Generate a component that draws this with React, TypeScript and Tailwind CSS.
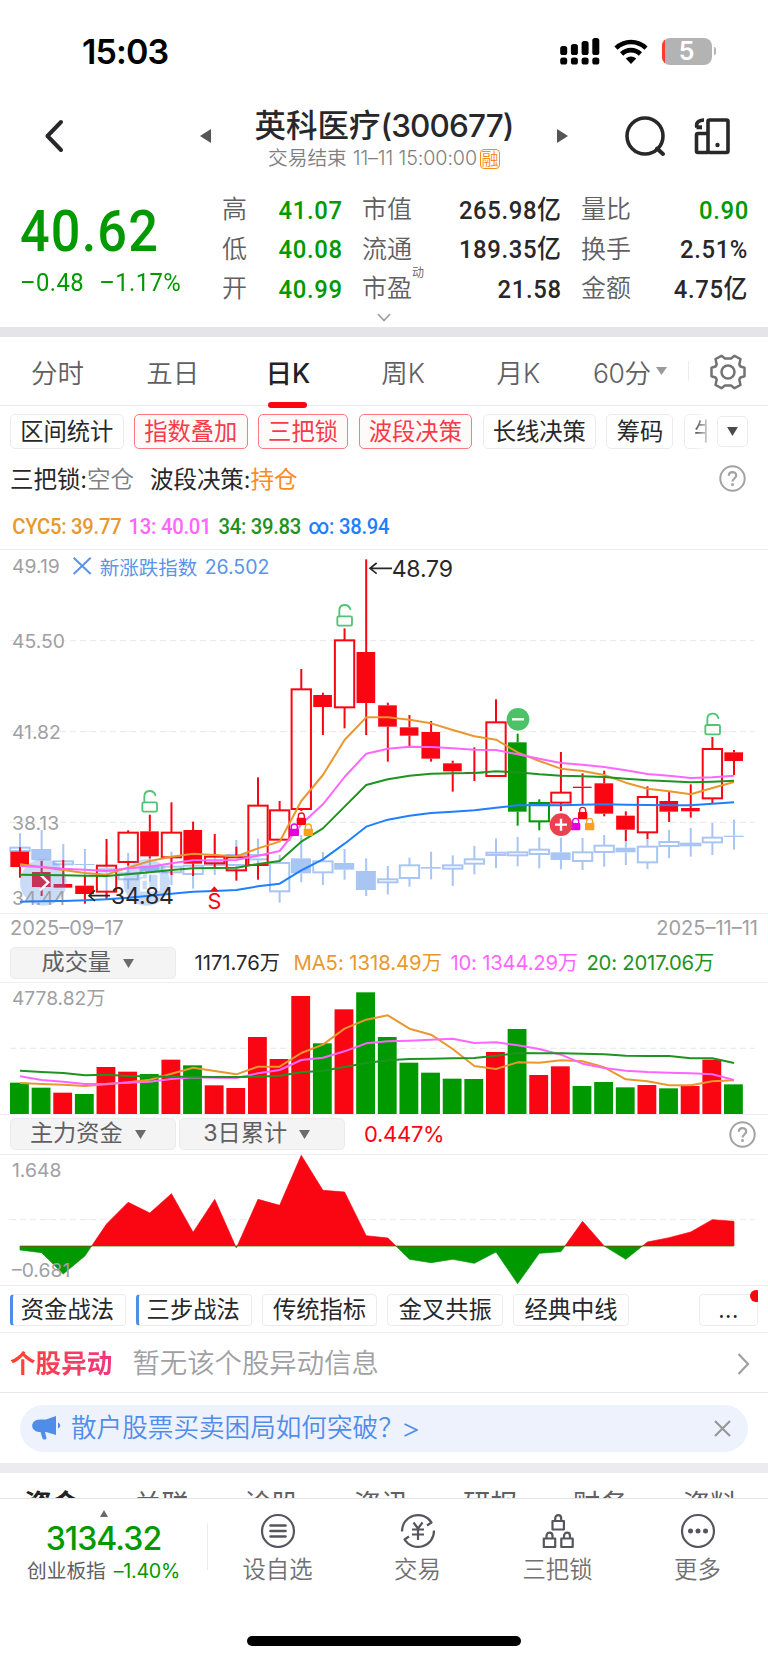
import React from 'react';

const RED = '#fa0512';
const GREEN = '#009900';
const ORANGE = '#e8982e';
const PINK = '#ff66ff';
const DEEP_GREEN = '#1f9322';
const BLUE = '#1f80ff';
const INDEX_BLUE = '#a8c5f3';
const GREY_TEXT = '#a0a0a3';

const CHART_FONT = 'Inter, "Noto Sans CJK SC", sans-serif';

// charts are drawn on a 2304 unit wide canvas, 3 units per css pixel
const cx = (i: number) => 60 + 64.91 * i;

type Kind = 'r' | 'h' | 'g' | 'k';
type Candle = [top: number, bottom: number, high: number, low: number, kind: Kind];

const candles: Candle[] = [
  [920, 966, 907, 998, 'r'],
  [981, 1026, 948, 1053, 'r'],
  [1017, 1028, 945, 1028, 'r'],
  [1022, 1047, 990, 1076, 'r'],
  [962, 1040, 882, 1062, 'h'],
  [863, 951, 856, 962, 'h'],
  [859, 934, 809, 940, 'r'],
  [863, 937, 772, 990, 'h'],
  [855, 956, 830, 993, 'r'],
  [935, 955, 867, 968, 'h'],
  [937, 976, 905, 1007, 'h'],
  [782, 960, 697, 1004, 'h'],
  [796, 884, 768, 884, 'h'],
  [433, 792, 372, 798, 'h'],
  [450, 486, 443, 570, 'r'],
  [286, 487, 250, 550, 'h'],
  [321, 474, 43, 570, 'r'],
  [481, 545, 473, 650, 'r'],
  [547, 572, 510, 604, 'r'],
  [561, 641, 528, 650, 'r'],
  [655, 679, 647, 740, 'r'],
  [681, 685, 607, 708, 'r'],
  [532, 693, 463, 693, 'h'],
  [592, 800, 566, 842, 'g'],
  [774, 829, 763, 856, 'k'],
  [743, 773, 621, 798, 'h'],
  [725, 729, 685, 780, 'r'],
  [715, 806, 677, 814, 'r'],
  [812, 854, 799, 888, 'r'],
  [756, 862, 724, 882, 'h'],
  [768, 800, 741, 831, 'r'],
  [789, 799, 718, 818, 'r'],
  [612, 760, 576, 775, 'h'],
  [622, 648, 615, 690, 'r'],
];

const indexCandles: Candle[] = [
  [908, 918, 865, 960, 'h'],
  [912, 946, 855, 990, 'r'],
  [949, 958, 897, 1010, 'h'],
  [957, 960, 912, 1010, 'r'],
  [970, 982, 930, 1062, 'r'],
  [985, 1003, 924, 1032, 'h'],
  [962, 985, 905, 1010, 'r'],
  [965, 982, 920, 1020, 'h'],
  [962, 987, 930, 1031, 'h'],
  [952, 960, 880, 990, 'h'],
  [930, 960, 885, 985, 'h'],
  [930, 943, 881, 990, 'h'],
  [954, 1039, 930, 1073, 'h'],
  [940, 985, 870, 1012, 'r'],
  [949, 982, 921, 1020, 'h'],
  [954, 974, 912, 1004, 'r'],
  [978, 1035, 940, 1053, 'r'],
  [1003, 1012, 963, 1048, 'h'],
  [961, 999, 938, 1025, 'h'],
  [966, 971, 920, 1003, 'r'],
  [961, 971, 931, 1023, 'h'],
  [943, 956, 903, 988, 'h'],
  [923, 930, 880, 969, 'h'],
  [922, 931, 876, 964, 'h'],
  [914, 927, 877, 970, 'h'],
  [922, 945, 878, 973, 'r'],
  [922, 948, 879, 975, 'h'],
  [902, 921, 870, 965, 'h'],
  [908, 922, 880, 960, 'r'],
  [905, 952, 880, 972, 'h'],
  [891, 903, 855, 939, 'h'],
  [896, 901, 849, 935, 'h'],
  [878, 892, 834, 930, 'h'],
  [872, 876, 824, 914, 'r'],
];

const cyc5 = [958, 966, 975, 984, 989, 968, 948, 935, 926, 930, 934, 910, 890, 768, 690, 585, 517, 517, 524, 535, 555, 574, 584, 622, 648, 671, 678, 690, 713, 731, 739, 748, 729, 711];
const cyc13 = [963, 966, 971, 974, 978, 970, 965, 955, 946, 946, 945, 932, 918, 838, 778, 696, 626, 611, 605, 606, 610, 614, 615, 628, 641, 654, 659, 666, 676, 687, 692, 699, 697, 692];
const cyc34 = [989, 990, 991, 992, 993, 988, 982, 975, 970, 969, 968, 957, 948, 890, 850, 785, 720, 703, 692, 686, 685, 684, 679, 682, 688, 692, 694, 696, 701, 706, 709, 712, 710, 707];
const cycAll = [1070, 1069, 1068, 1066, 1063, 1058, 1052, 1046, 1040, 1038, 1035, 1024, 1016, 976, 943, 896, 845, 824, 812, 804, 800, 796, 788, 781, 780, 781, 779, 778, 779, 780, 781, 781, 776, 772];

const volumes: [number, 'r' | 'g'][] = [
  [518, 'g'], [533, 'g'], [548, 'r'], [552, 'g'], [471, 'r'], [485, 'r'], [492, 'g'], [449, 'r'], [466, 'g'],
  [526, 'r'], [534, 'r'], [381, 'r'], [447, 'r'], [258, 'r'], [400, 'g'], [298, 'r'], [247, 'g'], [381, 'g'],
  [458, 'g'], [488, 'g'], [506, 'g'], [507, 'g'], [426, 'r'], [357, 'g'], [495, 'r'], [469, 'r'], [528, 'g'],
  [516, 'g'], [532, 'g'], [525, 'r'], [535, 'g'], [528, 'r'], [449, 'r'], [523, 'g'],
];
const ma5 = [519, 522, 524, 528, 523, 517, 509, 491, 473, 483, 493, 470, 470, 429, 404, 356, 329, 316, 356, 374, 417, 468, 477, 457, 458, 451, 454, 472, 508, 514, 526, 526, 514, 511];
const ma10 = [499, 510, 515, 522, 521, 518, 515, 507, 502, 503, 504, 490, 480, 450, 443, 424, 400, 394, 392, 389, 386, 399, 397, 406, 417, 434, 461, 474, 482, 486, 488, 490, 493, 510];
const ma20 = [482, 486, 489, 496, 494, 498, 499, 500, 500, 501, 501, 500, 497, 487, 482, 471, 459, 451, 447, 446, 445, 444, 437, 429, 430, 430, 431, 433, 437, 438, 438, 445, 445, 459];

const funds = [1020, 1028, 1092, 1038, 942, 877, 909, 851, 967, 868, 1014, 868, 886, 736, 841, 846, 977, 984, 1048, 1058, 1048, 1060, 1026, 1121, 1030, 1025, 934, 1008, 1048, 996, 983, 966, 929, 934];

const toPoints = (ys: number[]) => ys.map((y, i) => `${cx(i).toFixed(1)},${y}`).join(' ');

const Line = ({ ys, color }: { ys: number[]; color: string }) => (
  <polyline points={toPoints(ys)} fill="none" stroke={color} strokeWidth={6} strokeLinejoin="round" />
);

const GridLine = ({ y }: { y: number }) => (
  <line x1={30} x2={2264} y1={y} y2={y} stroke="#ececec" strokeWidth={4} strokeDasharray="19 11" />
);

const CandleShape = ({ c, i, color, half }: { c: Candle; i: number; color: string; half: number }) => {
  const [top, bottom, high, low, kind] = c;
  const x = cx(i);
  const hollow = kind === 'h' || kind === 'k';
  return (
    <g stroke={color}>
      <line x1={x} x2={x} y1={high} y2={top} strokeWidth={6} />
      <line x1={x} x2={x} y1={bottom} y2={low} strokeWidth={6} />
      {hollow ? (
        <rect x={x - 29} y={top} width={58} height={bottom - top} fill={color === INDEX_BLUE ? '#fff' : 'none'} fillOpacity={0.4} strokeWidth={6} />
      ) : (
        <rect x={x - half - 1} y={top} width={half * 2} height={bottom - top} fill={color} stroke="none" />
      )}
    </g>
  );
};

const OpenLock = ({ x, y }: { x: number; y: number }) => (
  <g transform={`translate(${x} ${y})`} fill="none" stroke="#52c474" strokeWidth={5.5}>
    <rect x={-22} y={36} width={44} height={28} rx={4} />
    <path d="M-16 36V19C-16 -3 12 -3 17 15" strokeLinecap="round" />
  </g>
);

const MiniLock = ({ x, y, color }: { x: number; y: number; color: string }) => (
  <g transform={`translate(${x} ${y})`}>
    <rect x={-14} y={-4} width={28} height={22} rx={3} fill={color} />
    <path d="M-9 -3V-9C-9 -21 9 -21 9 -9V-3" fill="none" stroke={color} strokeWidth={4} />
  </g>
);

const LockTrio = ({ x, y }: { x: number; y: number }) => (
  <g>
    <MiniLock x={x} y={y} color="#fa0512" />
    <MiniLock x={x - 21} y={y + 33} color="#e100d8" />
    <MiniLock x={x + 21} y={y + 33} color="#f6a21c" />
  </g>
);

const KLineChart = () => (
  <svg className="block w-full h-[365px] border-y border-[#efefef]" viewBox="0 15 2304 1089" preserveAspectRatio="none" fontFamily={CHART_FONT}>
    <GridLine y={287} />
    <GridLine y={560} />
    <GridLine y={832} />
    {indexCandles.map((c, i) => <CandleShape key={i} c={c} i={i} color={INDEX_BLUE} half={30} />)}
    <g stroke="#fff" strokeWidth={4} paintOrder="stroke" fill={GREY_TEXT} fontSize={58}>
      <text x={36} y={83}>49.19</text>
      <text x={36} y={309}>45.50</text>
      <text x={36} y={583}>41.82</text>
      <text x={36} y={855}>38.13</text>
    </g>
    {candles.map((c, i) => (
      <CandleShape key={i} c={c} i={i} color={c[4] === 'g' || c[4] === 'k' ? GREEN : RED} half={28} />
    ))}
    <circle cx={130} cy={1012} r={70} fill="#5b8ee6" fillOpacity={0.32} />
    <circle cx={440} cy={1012} r={70} fill="#5b8ee6" fillOpacity={0.32} />
    <text x={36} y={1081} fill={GREY_TEXT} fontSize={58}>34.44</text>
    <path d="M120 988L145 1012L120 1036" fill="none" stroke="#fff" strokeWidth={7} />
    <g fill="none" stroke="#fff" strokeWidth={7}>
      <rect x={444} y={986} width={32} height={50} rx={4} />
      <path d="M424 1004h20M424 1004v32h20M424 996c0-10 4-14 12-14" />
    </g>
    <Line ys={cyc5} color={ORANGE} />
    <Line ys={cyc13} color={PINK} />
    <Line ys={cyc34} color={DEEP_GREEN} />
    <Line ys={cycAll} color={BLUE} />

    <g stroke="#5a94e8" strokeWidth={6}>
      <path d="M221 38L272 87M272 38L221 87" />
    </g>
    <g fill="#5a94e8">
      <text x={299} y={89} fontSize={58.5}>新涨跌指数</text>
      <text x={614} y={87} fontSize={58.5}>26.502</text>
    </g>

    <g fill="#28282b" fontSize={69}>
      <path d="M1110 70H1176M1130 54L1110 70L1130 86" fill="none" stroke="#28282b" strokeWidth={5} />
      <text x={1175} y={97} letterSpacing={-0.5}>48.79</text>
      <path d="M267 1052H330M285 1036L267 1052L285 1068" fill="none" stroke="#28282b" strokeWidth={5} />
      <text x={333} y={1077} letterSpacing={-0.5}>34.84</text>
    </g>

    <OpenLock x={449} y={736} />
    <OpenLock x={1034} y={178} />
    <OpenLock x={2138} y={504} />
    <LockTrio x={904} y={822} />
    <LockTrio x={1748} y={805} />

    <circle cx={1554} cy={523} r={34} fill="#4bc168" />
    <path d="M1536 523h36" stroke="#fff" strokeWidth={7} />
    <circle cx={1683} cy={839} r={34} fill="#ee3f50" />
    <path d="M1665 839h36M1683 821v36" stroke="#fff" strokeWidth={7} />

    <path d="M630 1039L643 1024L656 1039Z" fill={RED} />
    <text x={643} y={1092} fill={RED} fontSize={65} textAnchor="middle">S</text>
  </svg>
);

const VolumeChart = () => (
  <svg className="block w-full h-[133px] border-y border-[#efefef]" viewBox="0 219 2304 393" preserveAspectRatio="none" fontFamily={CHART_FONT}>
    <GridLine y={415} />
    {volumes.map(([top, kind], i) => (
      <rect key={i} x={cx(i) - 30} y={top} width={56.5} height={613 - top} fill={kind === 'r' ? RED : GREEN} />
    ))}
    <Line ys={ma5} color={ORANGE} />
    <Line ys={ma10} color={PINK} />
    <Line ys={ma20} color={DEEP_GREEN} />
    <text x={36} y={286} fill={GREY_TEXT} fontSize={57.5}>4778.82万</text>
  </svg>
);

const FundChart = () => {
  const area = `60,1008 ${toPoints(funds)} ${cx(33)},1008`;
  return (
    <svg className="block w-full h-[132px] border-y border-[#efefef]" viewBox="0 735 2304 390" preserveAspectRatio="none" fontFamily={CHART_FONT}>
      <defs>
        <clipPath id="inflow"><rect x={0} y={731} width={2304} height={278} /></clipPath>
        <clipPath id="outflow"><rect x={0} y={1008} width={2304} height={119} /></clipPath>
      </defs>
      <GridLine y={929} />
      <polygon points={area} fill={GREEN} stroke={GREEN} strokeWidth={2} clipPath="url(#outflow)" />
      <polygon points={area} fill={RED} stroke={RED} strokeWidth={2} clipPath="url(#inflow)" />
      <g fill={GREY_TEXT} fontSize={58}>
        <text x={36} y={801}>1.648</text>
        <text x={36} y={1102}>–0.681</text>
      </g>
    </svg>
  );
};

const StatusBar = () => (
  <div className="h-[102px] flex items-center justify-between pl-[82px] pr-[52px]">
    <span className="mt-0.5 text-[34px] leading-none font-semibold text-black tracking-[-0.900px]">15:03</span>
    <div className="flex items-center gap-[14px]">
      <svg width="40" height="28" viewBox="0 0 40 28">
        {[0, 1, 2, 3].map((i) => (
          <g key={i}>
            <rect x={i * 10.7 + 0.2} y={[9, 7, 4, 1][i]} width={7} height={[9, 11, 14, 17][i]} rx={2.6} />
            <rect x={i * 10.7 + 0.2} y={20.5} width={7} height={7} rx={2.6} />
          </g>
        ))}
      </svg>
      <svg width="34" height="25" viewBox="0 0 34 25" fill="none" stroke="#000" strokeWidth="4.600">
        <path d="M2 9.200C10.500 1 23.500 1 32 9.200" />
        <path d="M7.600 15C13 9.800 21 9.800 26.400 15" />
        <path d="M17 25L11.800 19.500C14.800 16.800 19.200 16.800 22.200 19.500Z" fill="#000" stroke="none" />
      </svg>
      <div className="flex items-center gap-0.5">
        <div className="relative w-[50px] h-[27px] rounded-[8px] bg-[#b3b3b3] overflow-hidden flex items-center justify-center">
          <div className="absolute left-0 top-0 h-full w-[3px] bg-[#ff3b30]" />
          <span className="mt-px text-[25px] leading-none font-semibold text-white">5</span>
        </div>
        <div className="w-[2.500px] h-2 rounded-r-full bg-[#b3b3b3]" />
      </div>
    </div>
  </div>
);

const Header = () => (
  <header className="h-[85px] flex items-center text-[#28282b]">
    <div className="w-[200px] pl-[44px] pb-[17px]">
      <svg width="20" height="34" viewBox="0 0 20 34" fill="none" stroke="#28282b" strokeWidth="4" strokeLinecap="round" strokeLinejoin="round">
        <path d="M17 3L3.500 17L17 31" />
      </svg>
    </div>
    <svg className="mb-[17px]" width="11" height="14" viewBox="0 0 11 14"><path d="M11 0V14L0 7Z" fill="#555558" /></svg>
    <div className="w-[346px] pb-[13px] flex flex-col items-center">
      <h1 className="h-[42px] flex items-center text-[31.500px] font-medium leading-none whitespace-nowrap">
        英科医疗<span className="tracking-[-0.900px]">(300677)</span>
      </h1>
      <div className="h-6 flex items-center text-[19.700px] leading-none text-[#808083] whitespace-nowrap font-[350]">
        交易结束<span className="ml-[6px] tracking-[-0.100px]">11–11 15:00:00</span>
        <span className="ml-[3px] w-5 h-5 rounded-sm border-[1.500px] border-[#ff8a1e] text-[#ff8a1e] text-[17px] flex items-center justify-center">融</span>
      </div>
    </div>
    <svg className="mb-[17px]" width="11" height="14" viewBox="0 0 11 14"><path d="M0 0V14L11 7Z" fill="#555558" /></svg>
    <div className="ml-[56px] mb-[17px] flex gap-[28px] items-center">
      <svg width="42" height="42" viewBox="0 0 42 42" fill="none" stroke="#28282b" strokeWidth="3.600">
        <circle cx="21" cy="21" r="18" />
        <path d="M33 33.500L39 39" strokeWidth="4" strokeLinecap="round" />
      </svg>
      <svg width="37" height="38" viewBox="0 0 37 38" fill="none" stroke="#28282b" strokeWidth="3.600" strokeLinejoin="round">
        <rect x="14" y="3" width="20" height="32.500" rx="1.500" />
        <path d="M14 16.500H4C3 16.500 2.500 17 2.500 18V34C2.500 35 3 35.500 4 35.500H14" />
        <path d="M3 10.500C1.500 6 4.500 3 10 3" />
        <path d="M2.500 10.300H8" strokeWidth="4" />
        <circle cx="23.500" cy="28" r="2.200" fill="#28282b" stroke="none" />
      </svg>
    </div>
  </header>
);

const Quote = ({ label, value, green, sup }: { label: string; value: React.ReactNode; green?: boolean; sup?: string }) => (
  <div className="h-[39.500px] flex items-center justify-between">
    <span className="relative text-[25px] text-[#606063] font-[350]">
      {label}
      {sup && <sup className="absolute left-full top-[-9px] text-[12px] leading-none">{sup}</sup>}
    </span>
    <span className={`translate-x-[0.500px] origin-right scale-x-[0.9] font-['Roboto','Noto_Sans_CJK_SC',sans-serif] font-medium text-[26.500px] tracking-[0.700px] ${green ? 'text-[#009900]' : 'text-[#28282b]'}`}>
      {value}
    </span>
  </div>
);

const QuotePanel = () => (
  <section className="h-[140px] relative flex pt-[3px] pr-5 leading-none whitespace-nowrap">
    <div className="w-[222px] pl-5 text-[#009900] font-['Roboto',sans-serif]">
      <div className="h-[58px] mt-[12px] flex items-center origin-left scale-x-[0.9] font-medium text-[58px] tracking-[1.300px]">40.62</div>
      <div className="h-[40px] mt-0.5 flex items-center origin-left scale-x-[0.9] text-[26.500px] tracking-[0.400px] gap-[17px]">
        <span>–0.48</span>
        <span>–1.17%</span>
      </div>
    </div>
    <div className="w-[120px]">
      <Quote label="高" value="41.07" green />
      <Quote label="低" value="40.08" green />
      <Quote label="开" value="40.99" green />
    </div>
    <div className="w-[199px] ml-[20px]">
      <Quote label="市值" value="265.98亿" />
      <Quote label="流通" value="189.35亿" />
      <Quote label="市盈" value="21.58" sup="动" />
    </div>
    <div className="flex-1 ml-[20px]">
      <Quote label="量比" value="0.90" green />
      <Quote label="换手" value="2.51%" />
      <Quote label="金额" value="4.75亿" />
    </div>
    <svg className="absolute left-[377px] bottom-[5px]" width="14" height="9" viewBox="0 0 14 9" fill="none" stroke="#a0a0a3" strokeWidth="1.800">
      <path d="M1 1L7 7.500L13 1" />
    </svg>
  </section>
);

const periods = ['分时', '五日', '日K', '周K', '月K'];

const PeriodTabs = () => (
  <nav className="h-[69px] flex items-center border-b border-[#ececec] text-[26.500px] text-[#606063] leading-none font-[350]">
    {periods.map((p) => (
      <div key={p} className={`w-[115.200px] h-full pt-[5px] relative flex items-center justify-center ${p === '日K' ? 'text-[#222225] font-medium' : ''}`}>
        {p}
        {p === '日K' && <div className="absolute -bottom-[3px] left-[38px] w-[39px] h-1.5 rounded-full bg-[#fa0512]" />}
      </div>
    ))}
    <div className="w-[113px] pl-[17px] flex items-center gap-[5px] whitespace-nowrap border-r border-[#ececec] h-5">
      <span className="mt-[5px] tracking-[-0.400px]">60分</span>
      <svg width="11" height="8" viewBox="0 0 11 8"><path d="M0 0H11L5.500 8Z" fill="#9a9a9d" /></svg>
    </div>
    <svg className="ml-[21px] mt-0.5" width="36" height="36" viewBox="-18 -18 36 36" fill="none" stroke="#737376" strokeWidth="2.500" strokeLinejoin="round">
      <path d="M-6.500 -16.200L-3 -13.500H3L6.500 -16.200L12.500 -13L11.300 -7.500L12.500 -5.500L16.500 -4.300V4.300L12.500 5.500L11.300 7.500L12.500 13L6.500 16.200L3 13.500H-3L-6.500 16.200L-12.500 13L-11.300 7.500L-12.500 5.500L-16.500 4.300V-4.300L-12.500 -5.500L-11.300 -7.500L-12.500 -13Z" />
      <circle cx="0" cy="0" r="6.500" />
    </svg>
  </nav>
);

const Chip = ({ children, active }: { children: React.ReactNode; active?: boolean }) => (
  <div className={`h-[35px] shrink-0 px-[9.200px] rounded-[5px] border flex items-center text-[23.300px] ${active ? 'border-[#ff7a80] bg-[#fffafa] text-[#fa3a48]' : 'border-[#ececec] text-[#28282b]'}`}>
    {children}
  </div>
);

const IndicatorChips = () => (
  <div className="h-[51px] flex items-center pl-2.5 leading-none whitespace-nowrap">
    <div className="w-[697px] flex gap-[10.400px] overflow-hidden">
      <Chip>区间统计</Chip>
      <Chip active>指数叠加</Chip>
      <Chip active>三把锁</Chip>
      <Chip active>波段决策</Chip>
      <Chip>长线决策</Chip>
      <Chip>筹码</Chip>
      <div className="w-[23px] h-[35px] overflow-hidden mask-r-from-30% mask-r-to-120%"><Chip>牛</Chip></div>
    </div>
    <div className="ml-[10px] w-[31px] h-[31px] rounded-[5px] border border-[#ececec] flex items-center justify-center">
      <svg width="11" height="9" viewBox="0 0 12 10"><path d="M0 0H12L6 10Z" fill="#4a4a50" /></svg>
    </div>
  </div>
);

const HelpIcon = () => (
  <svg width="27" height="27" viewBox="0 0 27 27" fill="none" stroke="#a3a3a6" strokeWidth="2">
    <circle cx="13.500" cy="13.500" r="12.200" />
    <path d="M9.800 10.800C9.800 6 17.200 6 17.200 10.500C17.200 13.500 13.500 13.500 13.500 16.600" strokeWidth="2.200" />
    <circle cx="13.500" cy="19.600" r="1.500" fill="#a3a3a6" stroke="none" />
  </svg>
);

const SignalRow = () => (
  <div className="h-[42px] flex items-center justify-between pl-[10px] pr-[22px] text-[23.500px] leading-none text-[#28282b]">
    <div className="flex gap-4 pt-[3px] tracking-[-0.050px]">
      <span>三把锁:<span className="text-[#808083] font-[350]">空仓</span></span>
      <span>波段决策:<span className="text-[#ff8a1e]">持仓</span></span>
    </div>
    <HelpIcon />
  </div>
);

const CycRow = () => (
  <div className="h-[50px] flex items-center pt-1 pl-[12px] gap-[8px] origin-left scale-x-[0.9] translate-x-[1.500px] font-['Roboto','Noto_Sans_CJK_SC',sans-serif] font-medium text-[22.500px] tracking-[-0.300px] whitespace-nowrap leading-none">
    <span className="text-[#e8982e]">CYC5: 39.77</span>
    <span className="text-[#ff66ff]">13: 40.01</span>
    <span className="text-[#1f9322]">34: 39.83</span>
    <span className="text-[#1f80ff]">∞: 38.94</span>
  </div>
);

const Selector = ({ children }: { children: React.ReactNode }) => (
  <button className="w-[165.500px] h-8 rounded-[5px] bg-[#f4f4f4] border border-[#ebebeb] flex items-center justify-center gap-3 pr-[10px] text-[23.200px] leading-none text-[#606063]">
    {children}
    <svg width="11" height="9" viewBox="0 0 11 9"><path d="M0 0H11L5.500 9Z" fill="#6b6b6e" /></svg>
  </button>
);

const strategies = ['资金战法', '三步战法', '传统指标', '金叉共振', '经典中线'];

const StrategyRow = () => (
  <div className="h-[47px] relative flex items-center gap-2.5 px-2.5 pt-px border-b border-[#ececec] text-[23.300px] leading-none text-[#28282b]">
    {strategies.map((s, i) => (
      <div key={s} className={`w-[115.800px] h-8 rounded-[4px] border border-[#ececec] flex items-center justify-center ${i < 2 ? 'border-l-[3.500px] border-l-[#4f8ee8] pr-[3px]' : ''}`}>
        {s}
      </div>
    ))}
    <div className="ml-auto relative w-[59px] h-8 rounded-[4px] border border-[#ececec] flex items-center justify-center">
      <span className="text-[22px] tracking-[0.500px]">...</span>
      <div className="absolute -right-px -top-[5px] w-2 h-3 overflow-hidden">
        <div className="w-3 h-3 rounded-full bg-[#fa0512]" />
      </div>
    </div>
  </div>
);

const AlertRow = () => (
  <div className="h-[60px] flex items-center border-b border-[#e8e8e8] pl-2.5 pr-[18px] pt-0.5 leading-none whitespace-nowrap">
    <span className="text-[25.600px] leading-[34px] font-bold bg-linear-to-r from-[#ff4322] to-[#f0357c] bg-clip-text text-transparent">个股异动</span>
    <span className="ml-[20px] text-[27.400px] text-[#a0a0a3] font-[350]">暂无该个股异动信息</span>
    <svg className="ml-auto" width="13" height="22" viewBox="0 0 13 22" fill="none" stroke="#a0a0a3" strokeWidth="2.200">
      <path d="M1.500 1L11 11L1.500 21" />
    </svg>
  </div>
);

const PromoBanner = () => (
  <div className="h-[70px] flex items-center px-5">
    <div className="w-full h-[47px] rounded-full bg-[#edf2fc] flex items-center pl-3 pr-[17px] text-[25.600px] leading-none text-[#508de9] font-[350]">
      <svg width="29" height="24" viewBox="0 0 29 24" fill="#508de9">
        <path d="M8 3.500H14L24 0V19L14 16H13L14.500 22C14.500 24 11 24 10.500 22.500L8.500 16C-2.500 16-2.500 3.500 8 3.500Z" />
        <path d="M26 6.500C29 8 29 11 26 12.500Z" />
      </svg>
      <span className="ml-[10px]">散户股票买卖困局如何突破？</span>
      <svg width="14" height="14" viewBox="0 0 14 14" fill="none" stroke="#508de9" strokeWidth="1.800" className="mt-1">
        <path d="M0.500 1L13 7L0.500 13" />
      </svg>
      <svg className="ml-auto" width="17" height="17" viewBox="0 0 17 17" stroke="#98989b" strokeWidth="2.200">
        <path d="M1 1L16 16M16 1L1 16" />
      </svg>
    </div>
  </div>
);

const sections = ['资金', '关联', '诊股', '资讯', '研报', '财务', '资料'];

const SectionTabs = () => (
  <div className="h-[25.500px] -ml-[3px] overflow-hidden flex text-[27.500px] leading-[34px] text-[#606063] pt-[14px]">
    {sections.map((s, i) => (
      <span key={s} className={`w-[109.700px] shrink-0 text-center ${i === 0 ? 'font-bold text-[#222225]' : ''}`}>{s}</span>
    ))}
  </div>
);

const lockGlyph = 'M3.500 7.500V5C3.500 0.500 9.500 0.500 9.500 5V7.500M0.800 7.500H12.200V16H0.800Z';

const navItems = [
  {
    label: '设自选',
    icon: (
      <>
        <circle cx="18" cy="18" r="16" />
        <path d="M10.500 12.500H25.500M10.500 18H25.500M10.500 23.500H25.500" strokeWidth="2.600" strokeLinecap="round" />
      </>
    ),
  },
  {
    label: '交易',
    icon: (
      <>
        <path d="M2 18.500A16 16 0 0 1 31.500 9.500L27 12.500" />
        <path d="M34 17.500A16 16 0 0 1 4.500 26.500L9 23.500" />
        <path d="M13.500 9.500L18 15.500L22.500 9.500M18 15.500V27M12 16.500H24M12 21.500H24" />
      </>
    ),
  },
  {
    label: '三把锁',
    icon: (
      <>
        <path d={lockGlyph} transform="translate(11.700 0.500)" />
        <path d={lockGlyph} transform="translate(3 18)" />
        <path d={lockGlyph} transform="translate(20.500 18)" />
      </>
    ),
  },
  {
    label: '更多',
    icon: (
      <>
        <circle cx="18" cy="18" r="16" />
        <g fill="#55555e" stroke="none">
          <circle cx="10.500" cy="18" r="2.500" />
          <circle cx="18" cy="18" r="2.500" />
          <circle cx="25.500" cy="18" r="2.500" />
        </g>
      </>
    ),
  },
];

const BottomBar = () => (
  <footer className="h-[165px] border-t border-[#e4e4e4] relative flex items-start leading-none whitespace-nowrap">
    <div className="w-[207px] flex flex-col items-center">
      <svg className="mt-[11px]" width="8" height="7" viewBox="0 0 8 7"><path d="M4 0L8 7H0Z" fill="#6b6b6e" /></svg>
      <span className="mt-[6px] h-[32px] flex items-center text-[32px] font-medium text-[#009900] tracking-[-0.900px]">3134.32</span>
      <div className="mt-[5px] h-6 flex items-center gap-2 text-[19.700px] text-[#606063]">
        创业板指<span className="text-[#009900] tracking-[-0.300px]">–1.40%</span>
      </div>
    </div>
    <div className="mt-6 w-px h-[47px] bg-[#ececec]" />
    {navItems.map((item) => (
      <div key={item.label} className="w-[140px] pt-[14px] pr-px flex flex-col items-center">
        <svg width="36" height="36" viewBox="0 0 36 36" fill="none" stroke="#55555e" strokeWidth="2.200" strokeLinejoin="round">
          {item.icon}
        </svg>
        <span className="mt-[9px] text-[23.400px] text-[#707073] font-[350]">{item.label}</span>
      </div>
    ))}
    <div className="absolute left-[247px] bottom-[17px] w-[274px] h-[10px] rounded-full bg-black" />
  </footer>
);

export default function App() {
  return (
    <div className="w-[768px] h-[1663px] overflow-hidden bg-white flex flex-col [&>*]:shrink-0 font-['Inter','Noto_Sans_CJK_SC',sans-serif]">
      <StatusBar />
      <Header />
      <QuotePanel />
      <div className="h-2.5 bg-[#e5e5e8]" />
      <PeriodTabs />
      <IndicatorChips />
      <SignalRow />
      <CycRow />
      <KLineChart />
      <div className="h-[33px] px-[10px] pb-[5px] flex items-center justify-between text-[20px] leading-none text-[#a0a0a3]">
        <span>2025–09–17</span>
        <span>2025–11–11</span>
      </div>
      <div className="h-[35px] pl-2.5 flex items-start whitespace-nowrap">
        <Selector>成交量</Selector>
        <div className="h-8 ml-[19px] flex items-center gap-[8.500px] text-[20.300px] leading-none tracking-[-0.050px]">
          <span className="text-[#28282b] mr-[5px]">1171.76万</span>
          <span className="text-[#e8982e]">MA5: 1318.49万</span>
          <span className="text-[#ff66ff] tracking-[-0.200px]">10: 1344.29万</span>
          <span className="text-[#1f9322] tracking-[-0.200px]">20: 2017.06万</span>
        </div>
      </div>
      <VolumeChart />
      <div className="h-[39px] pl-2.5 pr-3 pb-px flex items-center">
        <Selector>主力资金</Selector>
        <div className="w-[3.500px]" />
        <Selector>3日累计</Selector>
        <span className="ml-[19.500px] text-[22px] leading-none text-[#fa0512] tracking-[-0.300px]">0.447%</span>
        <div className="ml-auto"><HelpIcon /></div>
      </div>
      <FundChart />
      <StrategyRow />
      <AlertRow />
      <PromoBanner />
      <div className="h-[9.500px] bg-[#ececee]" />
      <SectionTabs />
      <BottomBar />
    </div>
  );
}
